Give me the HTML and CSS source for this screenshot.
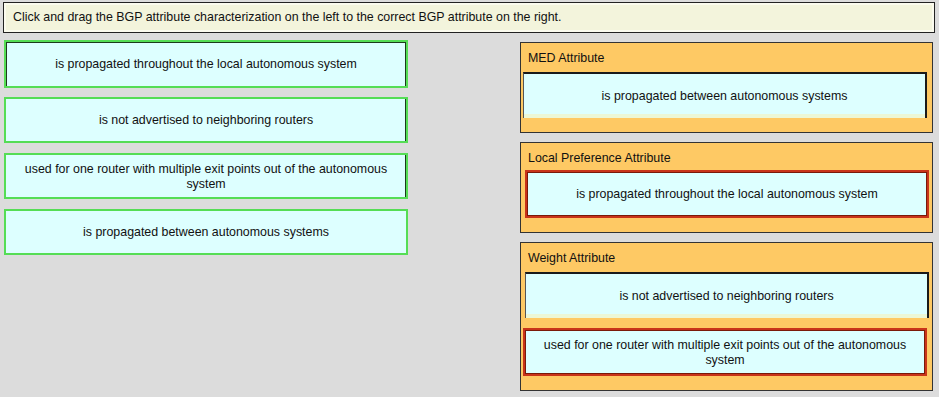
FILE: index.html
```html
<!DOCTYPE html>
<html lang="en">
<head>
    <meta charset="UTF-8">
    <title>BGP attributes drag and drop</title>
    <link rel="stylesheet" href="styles.css">
</head>
<body>
    <div id="instruction">Click and drag the BGP attribute characterization on the left to the correct BGP attribute on the right.</div>
    <div id="board">
        <div id="choices">
            <div class="card green dark-tl">is propagated throughout the local autonomous system</div>
            <div class="card green dark-r">is not advertised to neighboring routers</div>
            <div class="card green dark-r">used for one router with multiple exit points out of the autonomous system</div>
            <div class="card green">is propagated between autonomous systems</div>
        </div>
        <div id="targets">
            <div class="panel">
                <div class="title">MED Attribute</div>
                <div class="card placed dark-tr">is propagated between autonomous systems</div>
            </div>
            <div class="panel">
                <div class="title short">Local Preference Attribute</div>
                <div class="card placed red shifted">is propagated throughout the local autonomous system</div>
            </div>
            <div class="panel">
                <div class="title">Weight Attribute</div>
                <div class="card placed dark-tr shifted">is not advertised to neighboring routers</div>
                <div class="card placed red">used for one router with multiple exit points out of the autonomous system</div>
            </div>
        </div>
    </div>
</body>
</html>
```
FILE: styles.css
```css
* {
    padding: 0;
    margin: 0;
    box-sizing: border-box;
}
body {
    background-color: #dcdcdc;
    font-family: "Liberation Sans", Arial, sans-serif;
    font-size: 12.4px;
    color: #111;
    width: 939px;
    height: 397px;
    overflow: hidden;
}
#instruction {
    margin: 2px 0 0 3px;
    width: 932px;
    height: 31px;
    padding: 0 9px;
    line-height: 29px;
    background-color: #f3f4dc;
    border: 1px solid #222;
    box-shadow: inset 0 0 0 2px #fbfbee;
}
#board {
    display: flex;
    justify-content: space-between;
    padding: 7px 6px 0 4px;
}
#choices {
    width: 404px;
    display: flex;
    flex-direction: column;
    gap: 10px;
}
.card {
    display: flex;
    align-items: center;
    justify-content: center;
    text-align: center;
    padding: 1px 8px 0;
    background-color: #ddffff;
    line-height: 15px;
}
.green {
    height: 46px;
    border: 2px solid #55dd55;
}
.dark-tl {
    height: 48px;
    margin-bottom: -1px;
    box-shadow: inset 1px 1px 0 #1c3a1c, inset -1px 0 0 #1c3a1c;
}
.dark-r {
    box-shadow: inset -1px 0 0 #1c3a1c;
}
#targets {
    width: 413px;
    display: flex;
    flex-direction: column;
    gap: 9px;
    margin-top: 2px;
}
.panel {
    background-color: #fec964;
    border: 1px solid #333;
    padding: 0 5px 14px 2px;
}
.title {
    height: 29px;
    line-height: 29px;
    padding-left: 5px;
    padding-top: 1px;
}
.title.short {
    height: 27px;
}
.placed {
    height: 46px;
    margin-bottom: 10px;
}
.placed:last-child {
    margin-bottom: 0;
}
.dark-tr {
    border-top: 2px solid #1a1a1a;
    border-right: 2px solid #1a1a1a;
    border-left: 1px solid #555;
    box-shadow: inset 0 -4px 0 #ecf7d6;
}
.red {
    height: 48px;
    border: 2px solid #c8341a;
    box-shadow: inset 0 0 0 1px #7a1a0a;
}
.shifted {
    margin-left: 2px;
    margin-right: -2px;
}
```
